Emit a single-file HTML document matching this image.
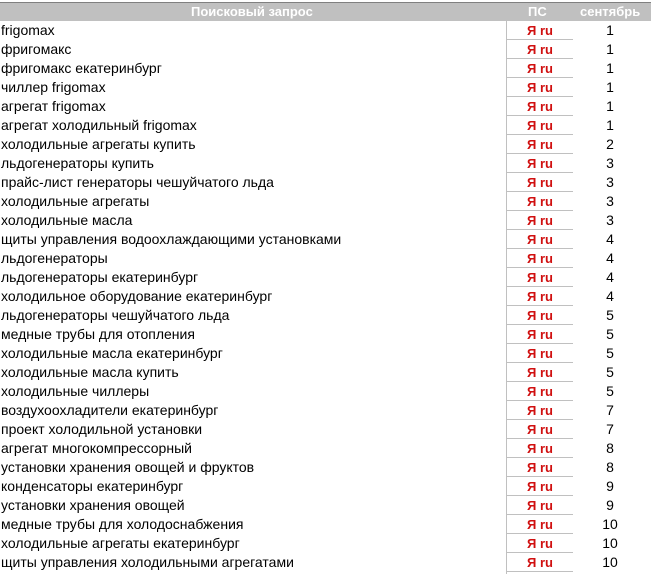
<!DOCTYPE html>
<html style="overflow:hidden"><head><meta charset="utf-8"><style>
html,body{margin:0;background:#fff;width:651px;height:574px;overflow:hidden;font-family:"Liberation Sans",Arial,sans-serif;}
.hd{position:absolute;left:0;top:2px;width:651px;height:19px;background:#c0c0c0;border-top:1px solid #808080;box-sizing:border-box;color:#fff;font-weight:bold;font-size:13px;line-height:18px;}
.hd span{position:absolute;top:0;}
.r{position:absolute;left:0;width:651px;height:19px;font-size:14px;line-height:19px;color:#000;}
.q{position:absolute;left:1px;top:0;white-space:nowrap;}
.p{position:absolute;left:506px;width:66px;height:18px;border-left:1px solid #c0c0c0;border-bottom:1px solid #c0c0c0;text-align:center;color:#d01010;font-weight:bold;font-size:13px;}
.n{position:absolute;left:580px;width:60px;text-align:center;}
</style></head><body>
<div class="hd"><span style="left:191px">Поисковый запрос</span><span style="left:528px">ПС</span><span style="left:580px">сентябрь</span></div>
<div id="rows"></div>
<script>
var d=[["frigomax",1],["фригомакс",1],["фригомакс екатеринбург",1],["чиллер frigomax",1],["агрегат frigomax",1],["агрегат холодильный frigomax",1],["холодильные агрегаты купить",2],["льдогенераторы купить",3],["прайс-лист генераторы чешуйчатого льда",3],["холодильные агрегаты",3],["холодильные масла",3],["щиты управления водоохлаждающими установками",4],["льдогенераторы",4],["льдогенераторы екатеринбург",4],["холодильное оборудование екатеринбург",4],["льдогенераторы чешуйчатого льда",5],["медные трубы для отопления",5],["холодильные масла екатеринбург",5],["холодильные масла купить",5],["холодильные чиллеры",5],["воздухоохладители екатеринбург",7],["проект холодильной установки",7],["агрегат многокомпрессорный",8],["установки хранения овощей и фруктов",8],["конденсаторы екатеринбург",9],["установки хранения овощей",9],["медные трубы для холодоснабжения",10],["холодильные агрегаты екатеринбург",10],["щиты управления холодильными агрегатами",10]];
var h="";for(var i=0;i<d.length;i++){h+='<div class="r" style="top:'+(21+i*19)+'px"><span class="q">'+d[i][0]+'</span><span class="p">Я ru</span><span class="n">'+d[i][1]+'</span></div>';}
h+='<div class="r" style="top:'+(21+29*19)+'px;height:2px;overflow:hidden"><span class="p"></span></div>';
document.getElementById("rows").innerHTML=h;
</script>
</body></html>
